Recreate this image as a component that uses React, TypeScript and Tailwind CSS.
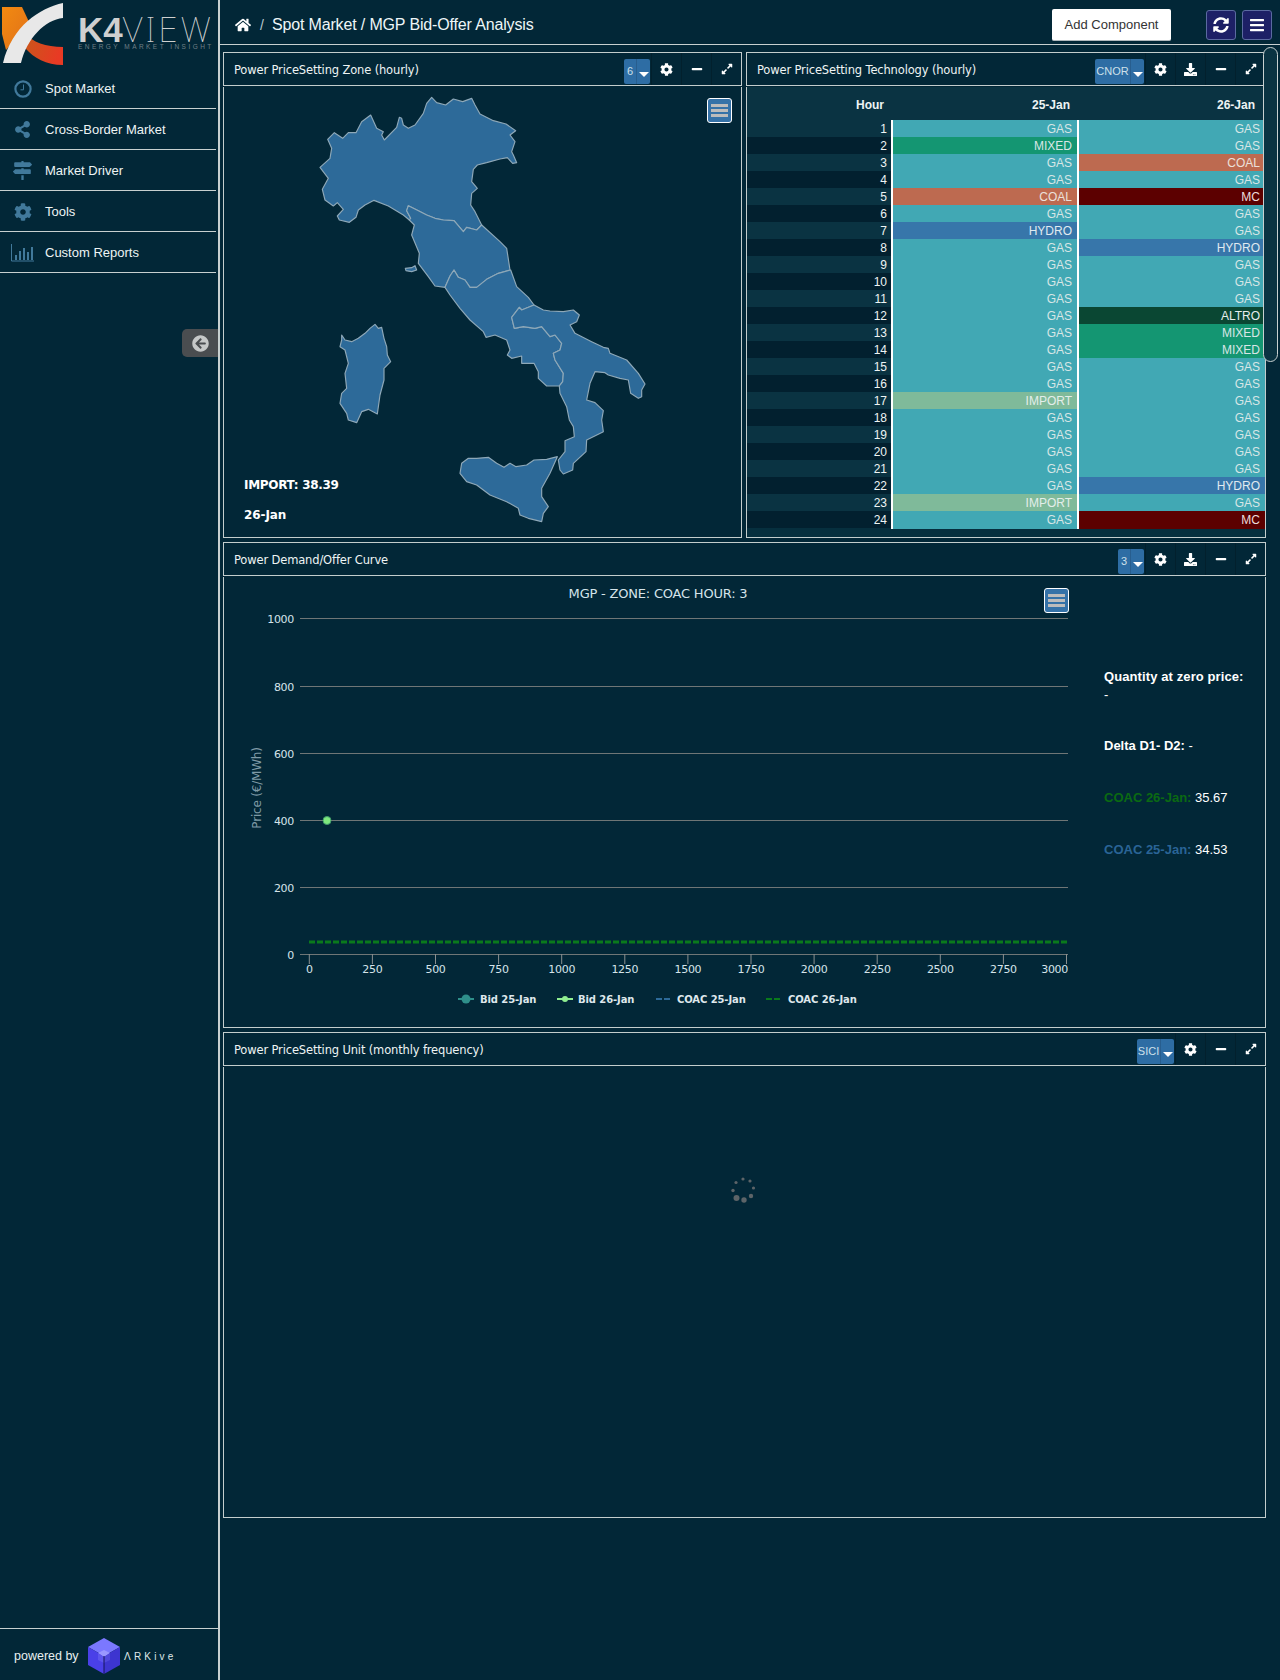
import React from "react";
import { FaHome, FaCog, FaMinus, FaExpandAlt, FaDownload, FaSyncAlt, FaBars, FaShareAlt, FaMapSigns, FaArrowCircleLeft } from "react-icons/fa";

const BORDER = "border-[#c3cdcd]";

const Hamburger = () => (
  <div className="w-[25px] h-[25px] rounded-[3px] border border-white bg-[#3572a8] flex flex-col items-center justify-center gap-[2px]">
    <div className="w-[17px] h-[3px] bg-[#bcbcbc]" />
    <div className="w-[17px] h-[3px] bg-[#bcbcbc]" />
    <div className="w-[17px] h-[3px] bg-[#bcbcbc]" />
  </div>
);

const Cell = ({ children }: { children: React.ReactNode }) => (
  <div className="w-[30px] h-[32px] flex items-center justify-center text-white border-l border-[#02202d]">{children}</div>
);

function Panel({ title, label, labelW, download, children, body }: { title: string; label: string; labelW: number; download?: boolean; children?: React.ReactNode; body: string }) {
  const widths: Record<number, string> = { 13: "w-[13px]", 35: "w-[36px]", 24: "w-[24px]" };
  return (
    <div className="flex flex-col min-w-0">
      <div className={`h-[34px] border ${BORDER} flex items-center`}>
        <div className="flex-1 pl-[10px] pt-[4px] text-[11.5px] text-[#eef4f4] font-['DejaVu_Sans',sans-serif] tracking-[-0.15px] whitespace-nowrap">{title}</div>
        <div className="flex items-center h-[25px] mt-[5px] mr-[1px] rounded-[2px] bg-[#2e6da4] text-[#cfe0ea] text-[11px] overflow-hidden">
          <div className={`${widths[labelW]} text-center border-r border-[#285e8e] h-full flex items-center justify-center`}>{label}</div>
          <div className="w-[13px] h-full flex items-center justify-center pt-[6px]">
            <div className="w-0 h-0 border-x-[5px] border-t-[5px] border-x-transparent border-t-white" />
          </div>
        </div>
        <Cell><FaCog size={13} /></Cell>
        {download && <Cell><FaDownload size={13} /></Cell>}
        <Cell><FaMinus size={12} /></Cell>
        <Cell><FaExpandAlt size={12} /></Cell>
      </div>
      <div className={`mt-[1px] border-x border-b ${BORDER} relative ${body}`}>{children}</div>
    </div>
  );
}

const zoneStyle = "fill-[#2d6a99] stroke-[#8ea8b8]";
const nord = "455,22 470,38 497,45 520,27 548,35 575,25 585,45 600,72 640,92 678,102 707,122 690,135 705,155 695,185 700,195 710,218 698,220 682,203 660,207 620,218 592,225 580,238 575,275 592,295 575,310 572,345 585,365 605,405 590,420 560,412 550,425 522,392 490,390 465,385 440,375 415,362 385,347 380,362 392,385 388,390 370,375 325,348 282,331 255,345 235,360 228,382 208,397 178,390 172,378 190,358 172,338 160,348 135,330 127,298 145,265 120,232 150,205 155,175 143,148 163,128 188,145 205,128 228,128 245,95 272,75 290,115 310,125 305,135 313,150 350,112 358,82 365,85 370,105 385,115 405,105 430,70 440,40";
const cnor = "385,347 415,362 440,375 465,385 490,390 522,392 550,425 560,412 590,420 605,405 660,455 680,475 690,540 655,550 620,568 590,592 570,592 555,570 535,562 522,540 510,558 495,592 465,588 445,560 415,520 418,490 395,435 403,405 388,390 392,385 380,362";
const elba = "376,535 395,533 405,527 410,540 395,545 378,542";
const csud = "495,592 510,558 522,540 535,562 555,570 570,592 590,592 620,568 655,550 692,540 710,590 745,622 762,645 725,660 718,652 695,682 703,715 730,710 765,715 785,710 810,740 825,735 845,760 840,780 820,790 825,810 850,850 848,875 838,888 800,888 775,865 775,845 762,820 725,820 725,798 695,805 682,795 690,780 680,750 645,735 618,742 610,725 570,690 540,655 510,615";
const sud = "762,645 790,660 810,663 850,665 880,660 898,675 890,695 870,705 885,730 935,755 970,772 985,775 990,790 1040,810 1075,850 1095,882 1085,900 1085,920 1075,925 1052,910 1045,870 1020,865 985,855 975,848 945,845 930,880 920,930 945,938 970,962 965,990 970,1025 920,1050 918,1085 880,1120 878,1140 850,1152 840,1140 835,1110 855,1085 855,1052 883,1040 880,1010 868,990 860,950 840,910 838,888 848,875 850,850 825,810 820,790 840,780 845,760 825,735 810,740 785,710 765,715 730,710 703,715 695,682 718,652 725,660";
const sicily = "565,1105 590,1105 625,1102 650,1120 672,1132 690,1120 708,1130 740,1125 762,1110 800,1108 832,1100 810,1150 785,1195 785,1220 805,1250 790,1270 785,1295 745,1285 720,1275 715,1255 680,1235 630,1215 590,1185 560,1175 540,1150 545,1120";
const sardinia = "185,735 195,750 215,755 235,745 255,730 270,715 285,703 295,715 305,712 312,745 320,770 322,795 332,815 312,835 312,870 300,915 292,972 265,958 245,965 230,998 205,990 200,970 180,940 185,910 200,895 195,850 205,820 195,780 180,770 185,750";

const ItalyMap = () => (
  <svg viewBox="0 0 1200 1350" className="w-[400px] h-[450px] block ml-[56px] mt-[3px]">
    {[nord, cnor, elba, csud, sud, sicily, sardinia].map((p, i) => (
      <polygon key={i} points={p} className={zoneStyle} strokeWidth={3.5} strokeLinejoin="round" />
    ))}
  </svg>
);

const GAS = "GAS";
const c1 = [GAS, "MIXED", GAS, GAS, "COAL", GAS, "HYDRO", GAS, GAS, GAS, GAS, GAS, GAS, GAS, GAS, GAS, "IMPORT", GAS, GAS, GAS, GAS, GAS, "IMPORT", GAS];
const c2 = [GAS, GAS, "COAL", GAS, "MC", GAS, GAS, "HYDRO", GAS, GAS, GAS, "ALTRO", "MIXED", "MIXED", GAS, GAS, GAS, GAS, GAS, GAS, GAS, "HYDRO", GAS, "MC"];
const techBg: Record<string, string> = {
  GAS: "bg-[#41a8b4] text-[#d8e6e6]",
  MIXED: "bg-[#149672] text-[#d8e6e6]",
  COAL: "bg-[#bd6a50] text-[#ece0da]",
  MC: "bg-[#5c0000] text-[#ecdcdc]",
  HYDRO: "bg-[#3776aa] text-[#e0eaf0]",
  ALTRO: "bg-[#0a4733] text-[#e6eeee]",
  IMPORT: "bg-[#7fba9a] text-[#e4eeea]",
};

const TechTable = () => (
  <div className="bg-[#062f3e] h-full text-[12px]">
    <div className="grid grid-cols-[144px_2px_184px_2px_186px] h-[33px] items-center bg-[#0a3342] font-bold text-[#eef4f4] text-right pt-[2px]">
      <div className="pr-[7px]">Hour</div>
      <div />
      <div className="pr-[7px]">25-Jan</div>
      <div />
      <div className="pr-[10px]">26-Jan</div>
    </div>
    {c1.map((t, i) => (
      <div key={i} className={`grid grid-cols-[144px_2px_184px_2px_186px] h-[17px] leading-[18px] text-right ${i % 2 === 0 ? "bg-[#0a3342]" : "bg-[#02202f]"}`}>
        <div className="pr-[4px] text-[#eef4f4]">{i + 1}</div>
        <div className="bg-white" />
        <div className={`pr-[5px] ${techBg[t]}`}>{t}</div>
        <div className="bg-white" />
        <div className={`pr-[5px] ${techBg[c2[i]]}`}>{c2[i]}</div>
      </div>
    ))}
  </div>
);

const yTicks = [[1000, 618], [800, 686], [600, 753], [400, 820], [200, 887], [0, 954]];
const xTicks = [0, 250, 500, 750, 1000, 1250, 1500, 1750, 2000, 2250, 2500, 2750, 3000];

const Curve = () => (
  <svg viewBox="224 577 870 450" className="w-[870px] h-[450px] block shrink-0">
    <text x={658} y={598} textAnchor="middle" fontSize={13} fill="#d5e4ea" fontFamily="'DejaVu Sans', sans-serif" letterSpacing={-0.2}>MGP - ZONE: COAC HOUR: 3</text>
    {yTicks.map(([v, y]) => (
      <g key={v}>
        <line x1={300} x2={1068} y1={y + 0.5} y2={y + 0.5} stroke="#6f7676" strokeWidth={1} />
        <text x={294} y={y + 5} textAnchor="end" fontSize={11} fill="#d5e4ea" fontFamily="'DejaVu Sans', sans-serif" letterSpacing={-0.3}>{v}</text>
      </g>
    ))}
    {xTicks.map((v, i) => {
      const x = 309.3 + i * 63.1;
      const last = v === 3000;
      return (
        <g key={v}>
          <line x1={x} x2={x} y1={954} y2={964} stroke="#8a9090" />
          <text x={last ? 1068 : x} y={973} textAnchor={last ? "end" : "middle"} fontSize={11} fill="#d5e4ea" fontFamily="'DejaVu Sans', sans-serif" letterSpacing={-0.3}>{v}</text>
        </g>
      );
    })}
    <text transform="translate(261 788) rotate(-90)" textAnchor="middle" fontSize={12} fill="#7f9aa6" fontFamily="'DejaVu Sans', sans-serif" letterSpacing={-0.2}>Price (€/MWh)</text>
    <line x1={309} x2={1068} y1={942} y2={942} stroke="#0a7a1c" strokeWidth={3} strokeDasharray="6 2" />
    <circle cx={327} cy={820.5} r={4} fill="#7ee87e" stroke="#3f9a6a" strokeWidth={1} />
    <g fontSize={10} fontWeight="bold" fill="#dfe8ec" fontFamily="'DejaVu Sans', sans-serif" letterSpacing={-0.1}>
      <line x1={458} x2={474} y1={999} y2={999} stroke="#2f8f8a" strokeWidth={2} />
      <circle cx={466} cy={999} r={4.5} fill="#2f8f8a" />
      <text x={480} y={1002.5}>Bid 25-Jan</text>
      <line x1={557} x2={573} y1={999} y2={999} stroke="#90ee90" strokeWidth={2} />
      <circle cx={565} cy={999} r={3} fill="#90ee90" />
      <text x={578} y={1002.5}>Bid 26-Jan</text>
      <line x1={656} x2={671} y1={999} y2={999} stroke="#2d6a99" strokeWidth={2} strokeDasharray="6 2" />
      <text x={677} y={1002.5}>COAC 25-Jan</text>
      <line x1={766} x2={781} y1={999} y2={999} stroke="#0a7a1c" strokeWidth={2} strokeDasharray="6 2" />
      <text x={788} y={1002.5}>COAC 26-Jan</text>
    </g>
  </svg>
);

const Spinner = () => (
  <svg width="30" height="30" viewBox="0 0 30 30" className="block">
    {[[15, 3, 1.6], [22, 5, 1.6], [25.5, 12, 1.6], [23, 20, 2.2], [16, 24, 2.7], [8.5, 22, 3], [5, 14.5, 1.7], [8, 6.5, 1.6]].map(([x, y, r], i) => (
      <circle key={i} cx={x} cy={y} r={r} fill="#5d6468" />
    ))}
  </svg>
);

const NavItem = ({ icon, label }: { icon: React.ReactNode; label: string }) => (
  <div className="h-[41px] border-b border-[#c8d0d0] flex items-center pt-[1px]">
    <div className="w-[45px] flex justify-center pl-[2px] pr-[2px] text-[#41799b]">{icon}</div>
    <span className="text-[13px] text-[#eef4f4]">{label}</span>
  </div>
);

const Logo = () => (
  <div className="h-[68px] flex">
    <svg width="66" height="66" viewBox="0 0 66 66" className="shrink-0">
      <defs>
        <linearGradient id="lg1" x1="0" y1="0" x2="1" y2="0.3">
          <stop offset="0" stopColor="#c8581a" />
          <stop offset="1" stopColor="#e83a24" />
        </linearGradient>
        <linearGradient id="lg2" x1="0" y1="0" x2="1" y2="1">
          <stop offset="0" stopColor="#f28a10" />
          <stop offset="1" stopColor="#e0701a" />
        </linearGradient>
      </defs>
      <polygon points="2,7 22,7 30,24 6,50 2,34" fill="url(#lg2)" />
      <path d="M25 33 C32 42 46 47 63 47 L63 65 C46 65 34 58 25 48 Z" fill="url(#lg1)" />
      <path d="M63 3 L63 18 C45 20 27 38 21 63 L3 63 C12 26 40 8 63 3 Z" fill="#e8e8e8" />
    </svg>
    <div className="pl-[12px] pt-[17px] flex flex-col leading-none">
      <div className="flex items-baseline h-[27px] text-[35px] text-[#cfd0d0] whitespace-nowrap">
        <span className="block leading-[24px] font-bold font-['Liberation_Sans',sans-serif]">K4</span>
        <span className="block leading-[24px] font-['Noto_Sans',sans-serif] font-thin tracking-[3px]">VIEW</span>
      </div>
      <div className="text-[6.5px] text-[#6f7f86] tracking-[2.45px] whitespace-nowrap">ENERGY MARKET INSIGHT</div>
    </div>
  </div>
);

const Footer = () => (
  <div className="mt-auto h-[52px] border-t border-[#c8d0d0] flex items-center relative -mr-[2px] pl-[14px] pt-[3px]">
    <span className="text-[12.5px] text-[#e8f0f0] w-[74px] mt-[1px]">powered by</span>
    <svg width="34" height="38" viewBox="0 0 34 38" className="shrink-0 -ml-[1px]">
      <polygon points="17,1 33,10 17,19 1,10" fill="#7b78ff" />
      <polygon points="1,10 17,19 17,37 1,28" fill="#4a40e8" />
      <polygon points="33,10 17,19 17,37 33,28" fill="#3d35d0" />
      <polygon points="17,13 23,16 17,20 11,16" fill="#9a98ff" />
      <polygon points="11,16 17,20 17,26 11,23" fill="#5d55ee" />
      <polygon points="23,16 17,20 17,26 23,23" fill="#5048dc" />
      <line x1="17" y1="19" x2="17" y2="37" stroke="#15155a" strokeWidth="1" />
    </svg>
    <span className="text-[10px] text-[#dfe8e8] tracking-[3.2px] ml-[3px] whitespace-nowrap">ΛRKive</span>
  </div>
);

export default function App() {
  return (
    <div className="w-[1280px] min-h-[1680px] flex bg-[#022737] font-['Liberation_Sans',Arial,sans-serif] relative">
      <aside className="w-[220px] shrink-0 border-r-2 border-[#c8d0d0] flex flex-col pr-[2px] relative">
        <Logo />
        <NavItem
          icon={
            <svg width="18" height="18" viewBox="0 0 18 18" fill="none" stroke="#41799b">
              <circle cx="9" cy="9" r="7.6" strokeWidth="2.2" />
              <path d="M9.5 4.5 V9.8 H6.5" strokeWidth="1" />
            </svg>
          }
          label="Spot Market"
        />
        <NavItem icon={<FaShareAlt size={17} />} label="Cross-Border Market" />
        <NavItem icon={<FaMapSigns size={19} />} label="Market Driver" />
        <NavItem icon={<FaCog size={18} />} label="Tools" />
        <NavItem
          icon={
            <svg width="23" height="18" viewBox="0 0 23 18" fill="#41799b">
              <path d="M0.5 0 V17 H23" fill="none" stroke="#41799b" />
              <rect x="4" y="11" width="2" height="5" />
              <rect x="8" y="7" width="2" height="9" />
              <rect x="12" y="4" width="2" height="12" />
              <rect x="16" y="8" width="2" height="8" />
              <rect x="20" y="3" width="2" height="13" />
            </svg>
          }
          label="Custom Reports"
        />
        <div className="absolute right-0 top-[329px] w-[36px] h-[28px] rounded-l-[5px] bg-[#4a4d50] flex items-center justify-center text-[#c6c8c8]">
          <FaArrowCircleLeft size={17} />
        </div>
        <Footer />
      </aside>

      <main className="flex-1 min-w-0 flex flex-col">
        <header className="h-[45px] border-b border-[#c8d0d0] flex items-center text-white pt-[6px]">
          <FaHome size={16} className="ml-[15px]" />
          <span className="ml-[9px] text-[14px] text-[#b9c9d0]">/</span>
          <span className="ml-[8px] text-[16px] text-[#eef6f8] tracking-[-0.15px]">Spot Market / MGP Bid-Offer Analysis</span>
          <button className="ml-auto w-[119px] h-[32px] bg-white rounded-[2px] border-b border-[#b0b8bc] text-[#333] text-[13px]">Add Component</button>
          <button className="ml-[35px] w-[30px] h-[30px] rounded-[3px] border border-[#5b6aa0] bg-[#1d2066] flex items-center justify-center">
            <FaSyncAlt size={16} />
          </button>
          <button className="ml-[6px] mr-[8px] w-[30px] h-[30px] rounded-[3px] border border-[#5b6aa0] bg-[#1d2066] flex items-center justify-center">
            <FaBars size={16} />
          </button>
        </header>

        <div className="pl-[3px] pr-[14px] pt-[7px] flex flex-col gap-[4px]">
          <div className="grid grid-cols-[519px_520px] gap-[4px]">
            <Panel title="Power PriceSetting Zone (hourly)" label="6" labelW={13} body="h-[451px]">
              <ItalyMap />
              <div className="absolute top-[11px] right-[9px]"><Hamburger /></div>
              <div className="absolute left-[20px] top-[389px] text-[12px] font-bold text-white font-['DejaVu_Sans',sans-serif] tracking-[-0.3px]">IMPORT: 38.39</div>
              <div className="absolute left-[20px] top-[419px] text-[12px] font-bold text-white font-['DejaVu_Sans',sans-serif] tracking-[-0.1px]">26-Jan</div>
            </Panel>
            <Panel title="Power PriceSetting Technology (hourly)" label="CNOR" labelW={35} download body="h-[451px]">
              <TechTable />
            </Panel>
          </div>

          <Panel title="Power Demand/Offer Curve" label="3" labelW={13} download body="h-[451px] flex">
            <Curve />
            <div className="absolute top-[11px] left-[820px]"><Hamburger /></div>
            <div className="pl-[10px] pt-[91px] text-[13px] text-white w-[165px]">
              <div className="font-bold leading-[18px] tracking-[0.1px] whitespace-nowrap">Quantity at zero price:</div>
              <div className="leading-[18px]">-</div>
              <div className="mt-[33px] leading-[18px]"><b>Delta D1- D2:</b> -</div>
              <div className="mt-[34px] leading-[18px]"><b className="text-[#0b6a12]">COAC 26-Jan:</b> 35.67</div>
              <div className="mt-[34px] leading-[18px]"><b className="text-[#2a6496]">COAC 25-Jan:</b> 34.53</div>
            </div>
          </Panel>

          <Panel title="Power PriceSetting Unit (monthly frequency)" label="SICI" labelW={24} body="h-[451px] flex items-start justify-center pt-[109px] pr-[4px]">
            <Spinner />
          </Panel>
        </div>
      </main>

      <div className="absolute left-[1263px] top-[47px] w-[15px] h-[315px] rounded-[8px] border border-[#c8d0d0] bg-[#0a3342]" />
    </div>
  );
}
